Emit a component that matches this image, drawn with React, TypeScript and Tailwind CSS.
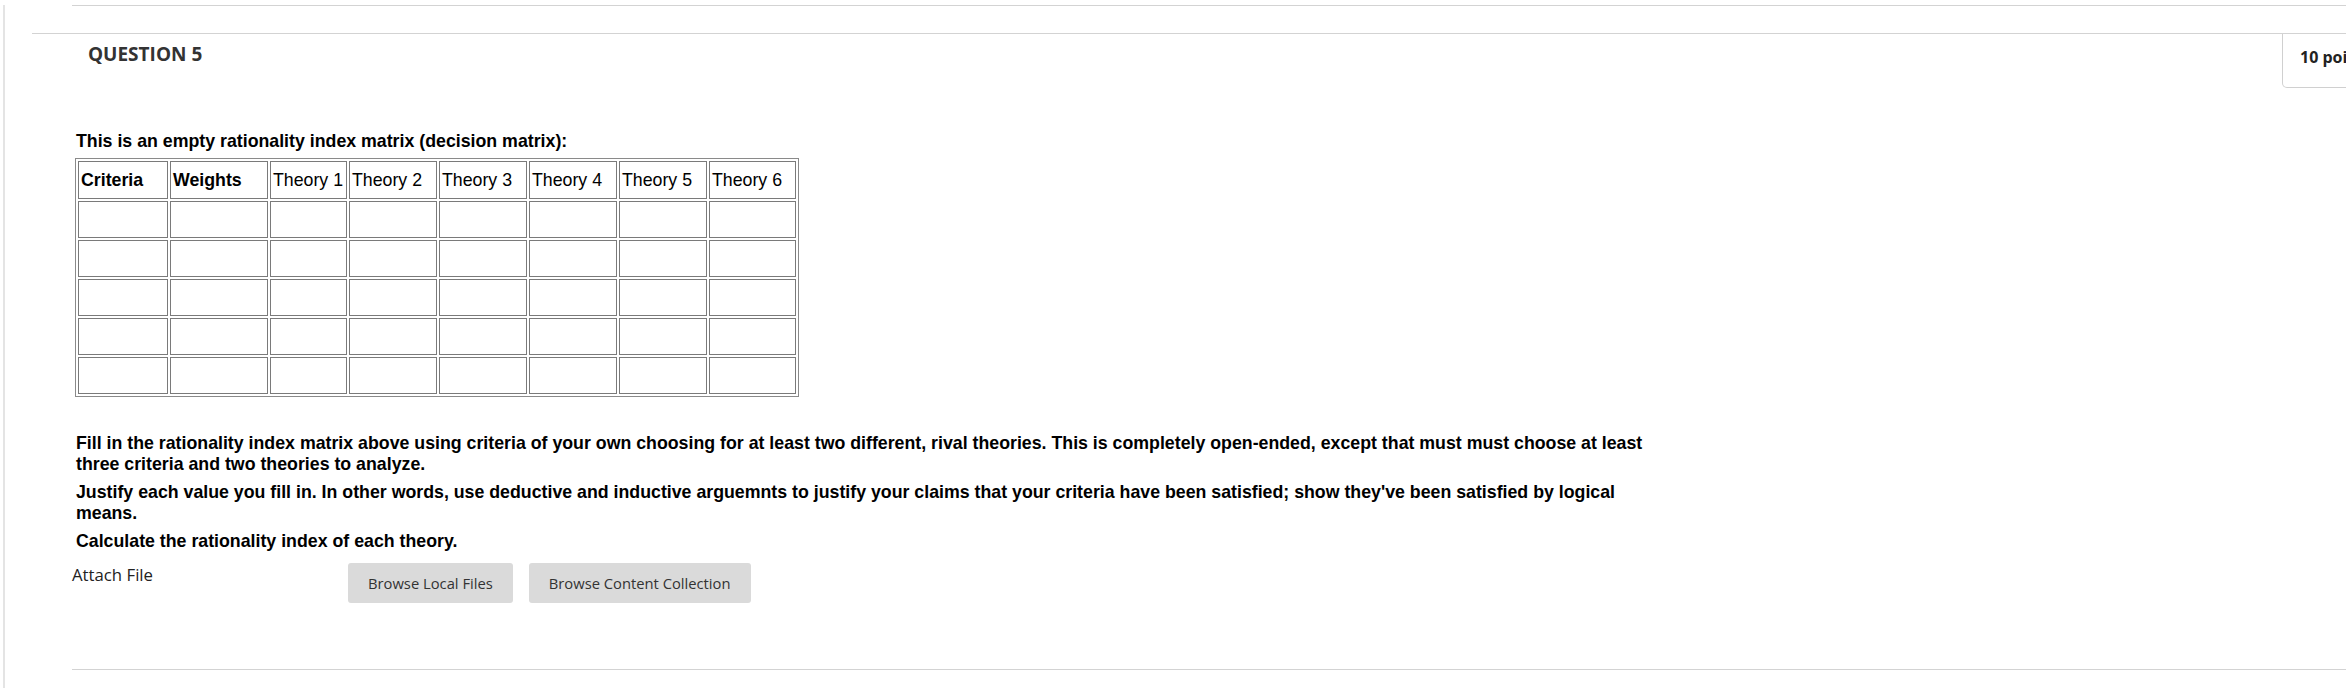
const theories = ['Theory 1', 'Theory 2', 'Theory 3', 'Theory 4', 'Theory 5', 'Theory 6'];
const colWidths = ['w-[90px]', 'w-[98px]', 'w-[77px]', 'w-[88px]', 'w-[88px]', 'w-[88px]', 'w-[88px]', 'w-[87px]'];

const arial = "font-['Liberation_Sans',Arial,sans-serif]";
const openSans = "font-['Open_Sans',sans-serif]";

function MatrixTable() {
  const headers = ['Criteria', 'Weights', ...theories];
  return (
    <table className={`${arial} table-fixed w-[724px] border-separate border-spacing-[2px] border border-[#8a8a8a] text-[17.75px] text-black`}>
      <tbody>
        <tr>
          {headers.map((h, i) => (
            <td
              key={h}
              className={`${colWidths[i]} h-[38px] border border-[#7a7a7a] px-[2px] py-0 align-middle leading-[20px] whitespace-nowrap ${i < 2 ? 'font-bold' : 'font-normal'}`}
            >
              {h}
            </td>
          ))}
        </tr>
        {[0, 1, 2, 3, 4].map((r) => (
          <tr key={r}>
            {headers.map((h) => (
              <td key={h} className="h-[37px] border border-[#7a7a7a] p-0">
                &nbsp;
              </td>
            ))}
          </tr>
        ))}
      </tbody>
    </table>
  );
}

export default function App() {
  return (
    <div className="w-[2346px] h-[688px] overflow-hidden bg-white pl-[3px]">
      <div className="h-full border-l-2 border-[#e4e4e4]">
        {/* top rule */}
        <div className="ml-[67px] mt-[5px] border-t border-[#d3d3d3]" />

        {/* question */}
        <div className="ml-[27px] mt-[27px] border-t border-[#d3d3d3]">
          <div className="flex justify-between">
            <h2 className={`${openSans} pl-[56px] pt-[7px] text-[19px] font-bold leading-[26px] text-[#333]`}>
              QUESTION 5
            </h2>
            <div className={`${openSans} w-[130px] -mr-[66px] h-[54px] shrink-0 border border-t-0 border-[#d0d0d0] rounded-bl-[5px] pl-[17px] pt-[12px] text-[16px] font-bold leading-[22px] text-[#222] whitespace-nowrap`}>
              10 points
            </div>
          </div>

          <div className={`${arial} pl-[44px] text-[17.75px] text-black`}>
            <p className="mt-[43px] font-bold leading-[20px]">
              This is an empty rationality index matrix (decision matrix):
            </p>
            <div className="mt-[7px] -ml-[1px]">
              <MatrixTable />
            </div>

            <div className="w-[1586px] font-bold leading-[21px]">
              <p className="mt-[36px]">
                Fill in the rationality index matrix above using criteria of your own choosing for at least two different, rival theories. This is completely open-ended, except that must must choose at least three criteria and two theories to analyze.
              </p>
              <p className="mt-[7px]">
                Justify each value you fill in. In other words, use deductive and inductive arguemnts to justify your claims that your criteria have been satisfied; show they've been satisfied by logical means.
              </p>
              <p className="mt-[7px]">Calculate the rationality index of each theory.</p>
            </div>

            <div className={`${openSans} mt-[11px] -ml-[4px] flex items-start`}>
              <div className="w-[276px] pt-[1px] text-[16.75px] leading-[22px] text-[#222]">Attach File</div>
              <div className="flex gap-4">
                <button className="h-[40px] px-5 rounded-[3px] bg-[#dadada] text-[14.75px] text-[#333]">
                  Browse Local Files
                </button>
                <button className="h-[40px] px-5 rounded-[3px] bg-[#dadada] text-[14.75px] text-[#333]">
                  Browse Content Collection
                </button>
              </div>
            </div>
          </div>
        </div>

        {/* bottom rule */}
        <div className="ml-[67px] mt-[66px] border-t border-[#d3d3d3]" />
      </div>
    </div>
  );
}
